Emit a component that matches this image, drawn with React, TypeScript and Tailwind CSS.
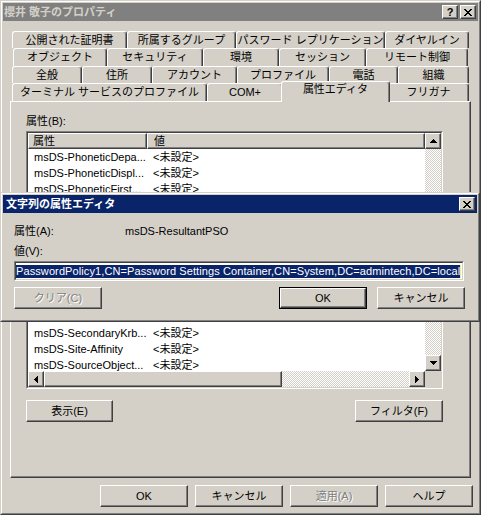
import React from "react";

const raised =
  "border border-t-white border-l-white border-r-[#404040] border-b-[#404040] shadow-[inset_-1px_-1px_0_#808080] bg-[#d4d0c8]";

type Tab = { label: string; w: string; selected?: boolean };

const tabRows: { h: string; ml: string; tabs: Tab[] }[] = [
  {
    h: "h-[17px]",
    ml: "ml-[9px]",
    tabs: [
      { label: "公開された証明書", w: "w-[115px]" },
      { label: "所属するグループ", w: "w-[109px]" },
      { label: "パスワード レプリケーション", w: "w-[149px]" },
      { label: "ダイヤルイン", w: "w-[84px]" },
    ],
  },
  {
    h: "h-[18px]",
    ml: "ml-[10px]",
    tabs: [
      { label: "オブジェクト", w: "w-[94px]" },
      { label: "セキュリティ", w: "w-[96px]" },
      { label: "環境", w: "w-[76px]" },
      { label: "セッション", w: "w-[87px]" },
      { label: "リモート制御", w: "w-[102px]" },
    ],
  },
  {
    h: "h-[17px]",
    ml: "ml-[9px]",
    tabs: [
      { label: "全般", w: "w-[70px]" },
      { label: "住所", w: "w-[70px]" },
      { label: "アカウント", w: "w-[85px]" },
      { label: "プロファイル", w: "w-[92px]" },
      { label: "電話", w: "w-[69px]" },
      { label: "組織", w: "w-[71px]" },
    ],
  },
  {
    h: "h-[18px]",
    ml: "ml-[9px]",
    tabs: [
      { label: "ターミナル サービスのプロファイル", w: "w-[195px]" },
      { label: "COM+", w: "w-[76px]" },
      { label: "属性エディタ", w: "w-[109px]", selected: true },
      { label: "フリガナ", w: "w-[81px]" },
    ],
  },
];

// ダイアログの裏に隠れている行は空にしておく
const items: [string, string][] = [
  ["msDS-PhoneticDepa...", "<未設定>"],
  ["msDS-PhoneticDispl...", "<未設定>"],
  ["msDS-PhoneticFirst...", "<未設定>"],
  ["", ""],
  ["", ""],
  ["", ""],
  ["", ""],
  ["", ""],
  ["", ""],
  ["", ""],
  ["", ""],
  ["msDS-SecondaryKrb...", "<未設定>"],
  ["msDS-Site-Affinity", "<未設定>"],
  ["msDS-SourceObject...", "<未設定>"],
];

function Frame({ className = "", children }: { className?: string; children: React.ReactNode }) {
  return (
    <div
      className={`border border-t-[#d4d0c8] border-l-[#d4d0c8] border-r-[#404040] border-b-[#404040] bg-[#d4d0c8] ${className}`}
    >
      <div className="h-full border border-t-white border-l-white border-r-[#808080] border-b-[#808080] p-px flex flex-col">
        {children}
      </div>
    </div>
  );
}

function Sunken({ className = "", children }: { className?: string; children: React.ReactNode }) {
  return (
    <div className={`border border-t-[#808080] border-l-[#808080] border-r-white border-b-white ${className}`}>
      <div className="h-full w-full border border-t-[#404040] border-l-[#404040] border-r-[#d4d0c8] border-b-[#d4d0c8] overflow-hidden">
        {children}
      </div>
    </div>
  );
}

function Btn({
  label,
  w,
  disabled,
  primary,
}: {
  label: string;
  w: string;
  disabled?: boolean;
  primary?: boolean;
}) {
  const text = disabled ? (
    <span className="text-[#808080] [text-shadow:1px_1px_0_#fff]">{label}</span>
  ) : (
    <span>{label}</span>
  );
  if (primary) {
    return (
      <div className={`${w} h-[22px] border border-black`}>
        <div className={`h-full ${raised} flex items-center justify-center`}>{text}</div>
      </div>
    );
  }
  return <div className={`${w} h-[22px] ${raised} flex items-center justify-center`}>{text}</div>;
}

function CaptionBtn({ children }: { children: React.ReactNode }) {
  return (
    <div className={`w-[16px] h-[14px] ${raised} flex items-center justify-center`}>{children}</div>
  );
}

const CloseGlyph = () => (
  <svg width="8" height="7" viewBox="0 0 8 7" shapeRendering="crispEdges">
    <path d="M0 0h2v1h-2zM6 0h2v1h-2zM1 1h2v1h-2zM5 1h2v1h-2zM2 2h4v1h-4zM3 3h2v1h-2zM2 4h4v1h-4zM1 5h2v1h-2zM5 5h2v1h-2zM0 6h2v1h-2zM6 6h2v1h-2z" fill="#000" />
  </svg>
);

const Arrow = ({ dir }: { dir: "up" | "down" | "left" | "right" }) => {
  if (dir === "up" || dir === "down") {
    return (
      <svg width="7" height="4" viewBox="0 0 7 4" shapeRendering="crispEdges">
        <path
          d={dir === "up" ? "M3 0h1v1h1v1h1v1h1v1h-7v-1h1v-1h1v-1h1z" : "M0 0h7v1h-1v1h-1v1h-1v1h-1v-1h-1v-1h-1v-1h-1z"}
          fill="#000"
        />
      </svg>
    );
  }
  return (
    <svg width="4" height="7" viewBox="0 0 4 7" shapeRendering="crispEdges">
      <path
        d={dir === "left" ? "M3 0h1v7h-1v-1h-1v-1h-1v-1h-1v-1h1v-1h1v-1h1z" : "M0 0h1v1h1v1h1v1h1v1h-1v1h-1v1h-1v1h-1z"}
        fill="#000"
      />
    </svg>
  );
};

const dither =
  "bg-[image:repeating-conic-gradient(#ffffff_0_25%,#d4d0c8_0_50%)] bg-[length:2px_2px]";

export default function App() {
  return (
    <div className="relative w-[481px] h-[515px] overflow-hidden bg-[#d4d0c8] text-[11px] leading-[13px] text-black font-['Liberation_Sans','Noto_Sans_CJK_JP',sans-serif]">
      <Frame className="h-full">
        {/* タイトルバー */}
        <div className="h-[18px] bg-[#808080] flex items-center justify-between pl-[1px] pr-[2px]">
          <span className="font-bold text-[#d4d0c8]">櫻井 敬子のプロパティ</span>
          <div className="flex gap-[2px]">
            <CaptionBtn>
              <span className="font-bold text-[11px] leading-none">?</span>
            </CaptionBtn>
            <CaptionBtn>
              <CloseGlyph />
            </CaptionBtn>
          </div>
        </div>

        {/* タブ */}
        <div className="mt-[10px] flex flex-col">
          {tabRows.map((row, i) => (
            <div key={i} className={`${row.h} ${row.ml} flex`}>
              {row.tabs.map((t) => (
                <div
                  key={t.label}
                  className={`${t.w} shrink-0 flex items-center justify-center whitespace-nowrap rounded-t-[3px] border-t border-l border-r border-t-white border-l-white border-r-[#404040] shadow-[inset_-1px_0_0_#808080] bg-[#d4d0c8] ${
                    t.selected
                      ? "relative z-10 -mx-[2px] -mt-[2px] h-[calc(100%+3px)] pb-[5px]"
                      : "h-full"
                  }`}
                >
                  {t.label}
                </div>
              ))}
            </div>
          ))}
        </div>

        {/* タブページ */}
        <div className="ml-[7px] w-[461px] h-[377px] border border-t-white border-l-white border-r-[#404040] border-b-[#404040] shadow-[inset_-1px_-1px_0_#808080] pl-[15px] pt-[13px]">
          <div className="h-[13px]">属性(B):</div>
          <Sunken className="mt-[3px] w-[417px] h-[258px]">
            <div className="flex h-full">
              <div className="w-[397px] flex flex-col">
                <div className="h-[16px] flex">
                  <div className={`w-[119px] h-full ${raised} pl-[4px] flex items-center`}>属性</div>
                  <div className={`w-[278px] h-full ${raised} pl-[6px] flex items-center`}>値</div>
                </div>
                <div className="h-[222px] bg-white overflow-hidden">
                  {items.map(([name, value], i) => (
                    <div key={i} className="h-[16px] flex items-center whitespace-nowrap">
                      <span className="w-[119px] pl-[6px] overflow-hidden">{name}</span>
                      <span className="pl-[6px]">{value}</span>
                    </div>
                  ))}
                </div>
                <div className="h-[16px] flex">
                  <div className={`w-[16px] h-full ${raised} flex items-center justify-center`}>
                    <Arrow dir="left" />
                  </div>
                  <div className={`w-[238px] h-full ${raised}`} />
                  <div className={`flex-1 h-full ${dither}`} />
                  <div className={`w-[16px] h-full ${raised} flex items-center justify-center`}>
                    <Arrow dir="right" />
                  </div>
                </div>
              </div>
              <div className="w-[16px] flex flex-col">
                <div className={`h-[16px] ${raised} flex items-center justify-center`}>
                  <Arrow dir="up" />
                </div>
                <div className={`h-[206px] ${dither}`} />
                <div className={`h-[16px] ${raised} flex items-center justify-center`}>
                  <Arrow dir="down" />
                </div>
                <div className="h-[16px] bg-[#d4d0c8]" />
              </div>
            </div>
          </Sunken>
          <div className="mt-[11px] w-[417px] flex justify-between">
            <Btn label="表示(E)" w="w-[87px]" />
            <Btn label="フィルタ(F)" w="w-[88px]" />
          </div>
        </div>

        {/* 下部ボタン */}
        <div className="mt-[7px] pl-[97px] flex gap-[7px]">
          <Btn label="OK" w="w-[88px]" />
          <Btn label="キャンセル" w="w-[88px]" />
          <Btn label="適用(A)" w="w-[88px]" disabled />
          <Btn label="ヘルプ" w="w-[88px]" />
        </div>
      </Frame>

      {/* 文字列の属性エディタ */}
      <div className="absolute left-0 top-[192px] w-[480px] h-[130px] z-20">
        <Frame className="h-full">
          <div className="h-[18px] bg-[#0a246a] flex items-center justify-between pl-[3px] pr-[2px]">
            <span className="font-bold text-white">文字列の属性エディタ</span>
            <CaptionBtn>
              <CloseGlyph />
            </CaptionBtn>
          </div>
          <div className="px-[11px] pt-[12px]">
            <div className="h-[13px] flex">
              <span className="w-[111px]">属性(A):</span>
              <span>msDS-ResultantPSO</span>
            </div>
            <div className="mt-[7px] h-[13px]">値(V):</div>
            <Sunken className="mt-[3px] w-[450px] h-[20px]">
              <div className="h-full bg-white flex items-center whitespace-nowrap overflow-hidden">
                <span className="bg-[#0a246a] text-white tracking-[0.1px]">
                  PasswordPolicy1,CN=Password Settings Container,CN=System,DC=admintech,DC=local
                </span>
                <span className="w-px h-[13px] bg-[#f0f080] shrink-0" />
              </div>
            </Sunken>
            <div className="mt-[6px] w-[451px] flex justify-between">
              <Btn label="クリア(C)" w="w-[88px]" disabled />
              <div className="flex gap-[10px]">
                <Btn label="OK" w="w-[88px]" primary />
                <Btn label="キャンセル" w="w-[88px]" />
              </div>
            </div>
          </div>
        </Frame>
      </div>
    </div>
  );
}
